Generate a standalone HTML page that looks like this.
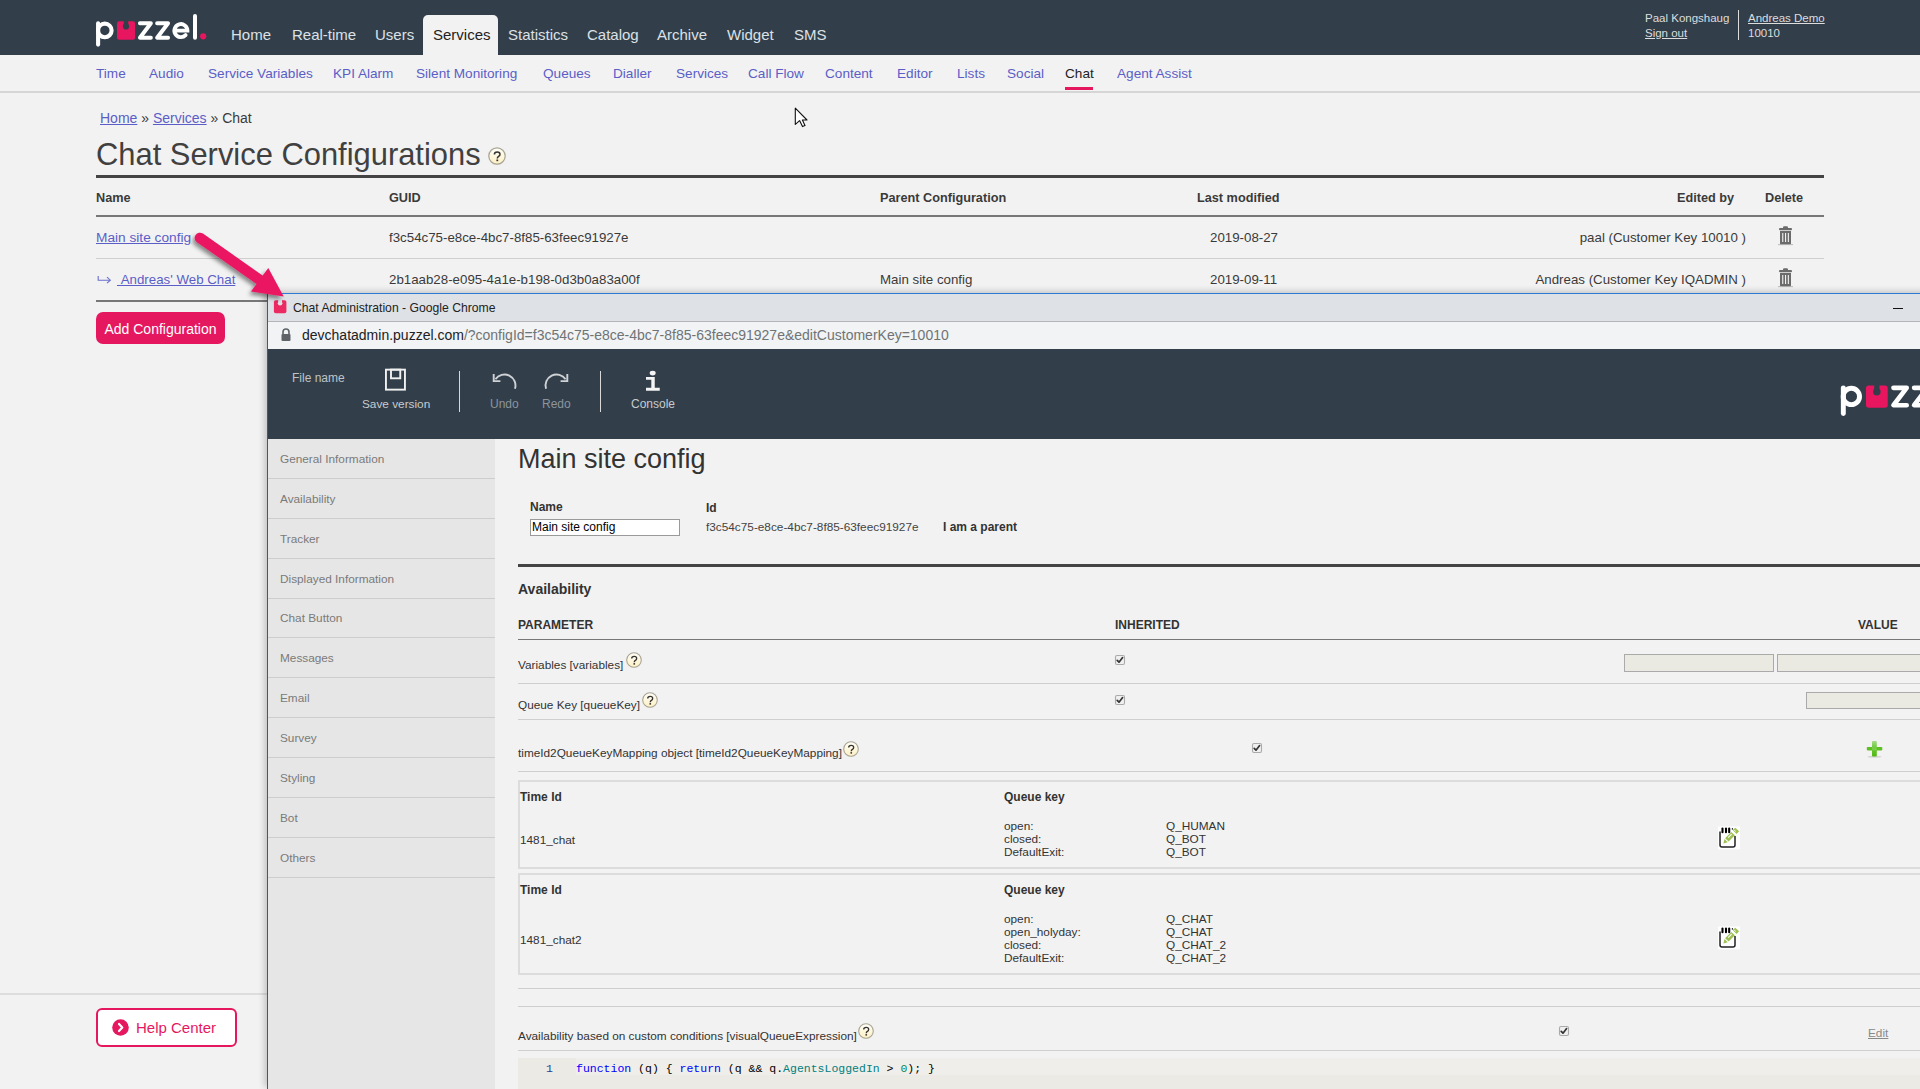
<!DOCTYPE html>
<html><head><meta charset="utf-8">
<style>
*{margin:0;padding:0;box-sizing:border-box}
html,body{width:1920px;height:1089px;overflow:hidden;background:#f2f2f2;font-family:"Liberation Sans",sans-serif}
.abs{position:absolute;white-space:nowrap}
#hdr{position:absolute;left:0;top:0;width:1920px;height:55px;background:#323f4b}
.nav{position:absolute;top:26px;font-size:15px;color:#dde1e5;line-height:18px}
#svtab{position:absolute;left:423px;top:15px;width:75px;height:40px;background:#f2f2f2;border-radius:5px 5px 0 0}
#subnav{position:absolute;left:0;top:55px;width:1920px;height:38px;background:#f2f2f2;border-bottom:2px solid #d6d6d6}
.sn{position:absolute;top:65px;font-size:13.6px;color:#5b5ec7;line-height:18px}
.lnk{color:#5b5ec7;text-decoration:underline}
.t14{font-size:13.3px;color:#3a3a3a;line-height:18px}
.th{font-size:12.7px;color:#3a3a3a;font-weight:bold;line-height:18px}
.hl{position:absolute;height:1px;background:#cfcfcf}
.help{position:absolute;width:18px;height:18px;border-radius:50%;border:1.5px solid #a8a596;background:linear-gradient(#fffef8,#fdf1c4);box-shadow:0 1px 1.5px rgba(0,0,0,.2);font:bold 12px/15px "Liberation Sans",sans-serif;color:#333;text-align:center}
/* window */
#win{position:absolute;left:267px;top:293px;width:1700px;height:796px;background:#f2f2f2;border-left:1px solid #555;box-shadow:-3px -2px 6px rgba(0,0,0,.18)}
#wtitle{position:absolute;left:0;top:0;width:100%;height:29px;background:#dee1e6;border-top:1px solid #2b7ad6;border-bottom:1px solid #b3b5b8}
#waddr{position:absolute;left:0;top:29px;width:100%;height:27px;background:#f1f3f4}
#adm{position:absolute;left:0;top:56px;width:100%;height:90px;background:#323f4b}
#side{position:absolute;left:0;top:146px;width:227px;height:650px;background:#e6e6e6}
.si{position:absolute;left:0;width:227px;height:40px;border-bottom:1px solid #cdcdcd;font-size:11.8px;color:#7a7a7a;padding-left:12px;line-height:40px}
.a12{font-size:11.8px;color:#333;line-height:14px}
.a12b{font-size:12px;color:#333;font-weight:bold;line-height:14px}
.cb{position:absolute;width:10px;height:10px;border:1px solid #aaa;border-radius:2px;background:#eee}

.s16{width:16px;height:16px;font-size:10.5px;line-height:14px;border-width:1.3px}
.edit{position:absolute;width:20px;height:22px}
</style></head><body>
<div id="hdr"></div>
<svg width="0" height="0" style="position:absolute"><defs><symbol id="hlp" viewBox="0 0 18 18"><defs><linearGradient id="hg" x1="0" y1="0" x2="0" y2="1"><stop offset="0" stop-color="#fffefa"/><stop offset="1" stop-color="#fdf0c2"/></linearGradient></defs><circle cx="9" cy="9.3" r="8.6" fill="#000" opacity=".08"/><circle cx="9" cy="9" r="8.2" fill="url(#hg)" stroke="#a9a594" stroke-width="1.2"/><path d="M6.4 7.4Q6.4 4.9 9.2 4.9Q12 4.9 12 7.2Q12 8.6 10.6 9.4Q9.3 10.2 9.3 11.6" fill="none" stroke="#333" stroke-width="1.5"/><rect x="8.4" y="12.5" width="1.8" height="1.7" fill="#333"/></symbol><symbol id="puz" viewBox="0 0 120 40">
<path d="M6.1 13.2V34.6" stroke="#fff" stroke-width="4.1" stroke-linecap="round" fill="none"/>
<circle cx="12.8" cy="20.4" r="6.8" stroke="#fff" stroke-width="4.1" fill="none"/>
<rect x="25" y="11.2" width="18.1" height="18.5" rx="2.2" fill="#e8155f"/>
<circle cx="34" cy="16.4" r="3.1" fill="#323f4b"/><rect x="31.8" y="10" width="4.4" height="6.5" fill="#323f4b"/>
<path d="M47.9 13.2H58.9L47.9 27.7H58.9" stroke="#fff" stroke-width="3.9" stroke-linecap="round" stroke-linejoin="round" fill="none"/>
<path d="M65.1 13.2H76.1L65.1 27.7H76.1" stroke="#fff" stroke-width="3.9" stroke-linecap="round" stroke-linejoin="round" fill="none"/>
<path d="M82.6 20.6H95.4A6.5 6.5 0 1 0 93.6 25.1" stroke="#fff" stroke-width="3.9" stroke-linecap="round" fill="none"/>
<path d="M103 6.1V27.7" stroke="#fff" stroke-width="4" stroke-linecap="round" fill="none"/>
<circle cx="111.2" cy="26.3" r="3.1" fill="#e8155f"/>
</symbol></defs></svg>
<div id="svtab"></div>
<!-- logo -->
<svg class="abs" style="left:92px;top:10px" width="120" height="40" viewBox="0 0 120 40"><use href="#puz"/></svg>
<div class="nav" style="left:231px">Home</div>
<div class="nav" style="left:292px">Real-time</div>
<div class="nav" style="left:375px">Users</div>
<div class="nav" style="left:433px;color:#222">Services</div>
<div class="nav" style="left:508px">Statistics</div>
<div class="nav" style="left:587px">Catalog</div>
<div class="nav" style="left:657px">Archive</div>
<div class="nav" style="left:727px">Widget</div>
<div class="nav" style="left:794px">SMS</div>

<div class="abs" style="left:1645px;top:11px;font-size:11.5px;color:#ddd;line-height:15px">Paal Kongshaug<br><span style="text-decoration:underline">Sign out</span></div>
<div class="abs" style="left:1738px;top:10px;width:1px;height:30px;background:#ddd"></div>
<div class="abs" style="left:1748px;top:11px;font-size:11.5px;color:#ddd;line-height:15px"><span style="text-decoration:underline">Andreas Demo</span><br>10010</div>

<div id="subnav"></div>
<div class="sn" style="left:96px">Time</div>
<div class="sn" style="left:149px">Audio</div>
<div class="sn" style="left:208px">Service Variables</div>
<div class="sn" style="left:333px">KPI Alarm</div>
<div class="sn" style="left:416px">Silent Monitoring</div>
<div class="sn" style="left:543px">Queues</div>
<div class="sn" style="left:613px">Dialler</div>
<div class="sn" style="left:676px">Services</div>
<div class="sn" style="left:748px">Call Flow</div>
<div class="sn" style="left:825px">Content</div>
<div class="sn" style="left:897px">Editor</div>
<div class="sn" style="left:957px">Lists</div>
<div class="sn" style="left:1007px">Social</div>
<div class="sn" style="left:1065px;color:#222">Chat</div>
<div class="abs" style="left:1065px;top:87px;width:28px;height:3px;background:#e5175f"></div>
<div class="sn" style="left:1117px">Agent Assist</div>

<!-- breadcrumb -->
<div class="abs t14" style="left:100px;top:109px;font-size:14px"><span class="lnk">Home</span> » <span class="lnk">Services</span> » Chat</div>
<div class="abs" style="left:96px;top:138px;font-size:30.9px;color:#404040;line-height:34px">Chat Service Configurations</div>
<svg class="abs" style="left:488px;top:147px" width="18" height="18" viewBox="0 0 18 18"><use href="#hlp"/></svg>
<div class="abs" style="left:96px;top:175px;width:1728px;height:3px;background:#444"></div>
<div class="abs th" style="left:96px;top:189px">Name</div>
<div class="abs th" style="left:389px;top:189px">GUID</div>
<div class="abs th" style="left:880px;top:189px">Parent Configuration</div>
<div class="abs th" style="left:1197px;top:189px">Last modified</div>
<div class="abs th" style="left:1677px;top:189px">Edited by</div>
<div class="abs th" style="left:1765px;top:189px">Delete</div>
<div class="abs" style="left:96px;top:215px;width:1728px;height:2px;background:#777"></div>
<div class="abs t14" style="left:96px;top:229px;font-size:13.7px"><span class="lnk">Main site config</span></div>
<div class="abs t14" style="left:389px;top:229px">f3c54c75-e8ce-4bc7-8f85-63feec91927e</div>
<div class="abs t14" style="left:1210px;top:229px">2019-08-27</div>
<div class="abs t14" style="right:174px;top:229px">paal (Customer Key 10010 )</div>
<div class="hl" style="left:96px;top:258px;width:1728px"></div>
<svg class="abs" style="left:97px;top:275px" width="15" height="10" viewBox="0 0 15 10"><path d="M1.2 1V5.2H13" fill="none" stroke="#6a6fd0" stroke-width="1.1"/><path d="M10 2.2L13.3 5.2L10 8.2" fill="none" stroke="#6a6fd0" stroke-width="1.1"/></svg>
<div class="abs t14" style="left:117px;top:271px"><span class="lnk">&nbsp;Andreas' Web Chat</span></div>
<div class="abs t14" style="left:389px;top:271px">2b1aab28-e095-4a1e-b198-0d3b0a83a00f</div>
<div class="abs t14" style="left:880px;top:271px">Main site config</div>
<div class="abs t14" style="left:1210px;top:271px">2019-09-11</div>
<div class="abs t14" style="right:174px;top:271px">Andreas (Customer Key IQADMIN )</div>
<div class="abs" style="left:96px;top:300px;width:1728px;height:2px;background:#777"></div>

<div class="abs" style="left:96px;top:312px;width:129px;height:32px;background:#e5175f;border-radius:7px;color:#fff;font-size:14px;line-height:35px;text-align:center">Add Configuration</div>

<div class="abs" style="left:0;top:993px;width:268px;height:2px;background:#ddd"></div>
<div class="abs" style="left:96px;top:1008px;width:141px;height:39px;border:2px solid #e5175f;border-radius:6px;background:#fff;color:#e5175f;font-size:15px;line-height:36px;padding-left:38px">Help Center</div>


<!-- chrome window -->
<div id="win">
  <div id="wtitle"></div>
  <div id="waddr"></div>
  <div id="adm"></div>
  <div id="side"></div>
</div>

<!-- title bar content -->
<svg class="abs" style="left:273px;top:300px" width="14" height="14" viewBox="0 0 14 14"><rect x="0.9" y="0.3" width="12.5" height="13" rx="1.8" fill="#ec2a62"/><circle cx="7.1" cy="3.3" r="2.3" fill="#dee1e6"/><rect x="5.2" y="-1" width="3.8" height="4.3" fill="#dee1e6"/></svg>
<div class="abs" style="left:293px;top:301px;font-size:12.2px;color:#222;line-height:15px">Chat Administration - Google Chrome</div>
<div class="abs" style="left:1893px;top:308px;width:10px;height:1px;background:#111"></div>
<!-- address -->
<svg class="abs" style="left:281px;top:328px" width="10" height="13" viewBox="0 0 10 13"><path d="M2 6V4a3 3 0 0 1 6 0v2" fill="none" stroke="#5f6368" stroke-width="1.6"/><rect x="0.5" y="6" width="9" height="7" rx="1" fill="#5f6368"/></svg>
<div class="abs" style="left:302px;top:327px;font-size:14px;color:#202124;line-height:17px">devchatadmin.puzzel.com<span style="color:#6f7376">/?configId=f3c54c75-e8ce-4bc7-8f85-63feec91927e&amp;editCustomerKey=10010</span></div>
<!-- admin toolbar -->
<div class="abs" style="left:292px;top:371px;font-size:12px;color:#bfc3c7;line-height:14px">File name</div>
<svg class="abs" style="left:384px;top:368px" width="23" height="24" viewBox="0 0 23 24"><rect x="1.95" y="1.65" width="19" height="20" fill="none" stroke="#f0f0f0" stroke-width="1.9"/><rect x="7" y="1.65" width="9.25" height="8.65" fill="none" stroke="#f0f0f0" stroke-width="1.9"/></svg>
<div class="abs" style="left:362px;top:397px;font-size:11.8px;color:#c8cbce;line-height:14px">Save version</div>
<div class="abs" style="left:459px;top:371px;width:1px;height:41px;background:#d8d8d8"></div>
<svg class="abs" style="left:491px;top:371px" width="27" height="20" viewBox="0 0 27 20"><path d="M4.4 8.25A11 11 0 0 1 23.96 17.8" fill="none" stroke="#cfd2d5" stroke-width="1.9"/><path d="M2.7 3V10.1H9.4" fill="none" stroke="#cfd2d5" stroke-width="1.9"/></svg>
<div class="abs" style="left:490px;top:397px;font-size:12px;color:#8d949b;line-height:14px">Undo</div>
<svg class="abs" style="left:543px;top:371px" width="27" height="20" viewBox="0 0 27 20"><g transform="translate(27,0) scale(-1,1)"><path d="M4.4 8.25A11 11 0 0 1 23.96 17.8" fill="none" stroke="#cfd2d5" stroke-width="1.9"/><path d="M2.7 3V10.1H9.4" fill="none" stroke="#cfd2d5" stroke-width="1.9"/></g></svg>
<div class="abs" style="left:542px;top:397px;font-size:12px;color:#8d949b;line-height:14px">Redo</div>
<div class="abs" style="left:600px;top:371px;width:1px;height:41px;background:#d8d8d8"></div>
<svg class="abs" style="left:644px;top:369px" width="18" height="24" viewBox="0 0 18 24"><ellipse cx="8.7" cy="4.1" rx="3" ry="2.4" fill="#f4f4f4"/><path d="M2 8H10.75V18.8H15.75V21.75H2V18.8H7.3V10.8H2Z" fill="#f4f4f4"/></svg>
<div class="abs" style="left:631px;top:397px;font-size:12px;color:#c8cbce;line-height:14px">Console</div>
<!-- logo right -->
<svg class="abs" style="left:1836px;top:372px" width="144" height="48" viewBox="0 0 120 40"><use href="#puz"/></svg>
<div class="si" style="left:268px;top:439px">General Information</div>
<div class="si" style="left:268px;top:479px">Availability</div>
<div class="si" style="left:268px;top:519px">Tracker</div>
<div class="si" style="left:268px;top:559px">Displayed Information</div>
<div class="si" style="left:268px;top:599px;height:39px;line-height:39px">Chat Button</div>
<div class="si" style="left:268px;top:638px">Messages</div>
<div class="si" style="left:268px;top:678px">Email</div>
<div class="si" style="left:268px;top:718px">Survey</div>
<div class="si" style="left:268px;top:758px">Styling</div>
<div class="si" style="left:268px;top:798px">Bot</div>
<div class="si" style="left:268px;top:838px">Others</div>

<!-- content -->
<div class="abs" style="left:518px;top:444px;font-size:27px;color:#333;line-height:31px">Main site config</div>
<div class="abs a12b" style="left:530px;top:500px">Name</div>
<div class="abs" style="left:530px;top:519px;width:150px;height:17px;border:1px solid #9a9a9a;background:#fff;font-size:12px;color:#000;line-height:15px;padding-left:1px">Main site config</div>
<div class="abs a12b" style="left:706px;top:501px">Id</div>
<div class="abs a12" style="left:706px;top:520px;color:#444">f3c54c75-e8ce-4bc7-8f85-63feec91927e</div>
<div class="abs a12b" style="left:943px;top:520px">I am a parent</div>
<div class="abs" style="left:518px;top:564px;width:1402px;height:3px;background:#444"></div>
<div class="abs" style="left:518px;top:581px;font-size:14px;font-weight:bold;color:#333;line-height:16px">Availability</div>
<div class="abs a12b" style="left:518px;top:618px">PARAMETER</div>
<div class="abs a12b" style="left:1115px;top:618px">INHERITED</div>
<div class="abs a12b" style="left:1858px;top:618px">VALUE</div>
<div class="abs" style="left:518px;top:639px;width:1402px;height:1px;background:#777"></div>

<div class="abs a12" style="left:518px;top:658px">Variables [variables]</div>
<svg class="abs" style="left:626px;top:652px" width="16" height="16" viewBox="0 0 18 18"><use href="#hlp"/></svg>
<svg class="abs" style="left:1114px;top:654px" width="12" height="12" viewBox="0 0 12 12"><rect x="1.5" y="1.5" width="9" height="9" rx="1.5" fill="#f0f0f0" stroke="#aaa" stroke-width="1.1"/><path d="M3.2 6.3L5 8.2L8.6 3.6" fill="none" stroke="#333" stroke-width="1.7" stroke-linecap="round" stroke-linejoin="round"/></svg>
<div class="abs" style="left:1624px;top:654px;width:150px;height:18px;border:1px solid #aaa;background:#eae9e2"></div>
<div class="abs" style="left:1777px;top:654px;width:150px;height:18px;border:1px solid #aaa;background:#eae9e2"></div>
<div class="hl" style="left:518px;top:683px;width:1402px"></div>

<div class="abs a12" style="left:518px;top:698px">Queue Key [queueKey]</div>
<svg class="abs" style="left:642px;top:692px" width="16" height="16" viewBox="0 0 18 18"><use href="#hlp"/></svg>
<svg class="abs" style="left:1114px;top:694px" width="12" height="12" viewBox="0 0 12 12"><rect x="1.5" y="1.5" width="9" height="9" rx="1.5" fill="#f0f0f0" stroke="#aaa" stroke-width="1.1"/><path d="M3.2 6.3L5 8.2L8.6 3.6" fill="none" stroke="#333" stroke-width="1.7" stroke-linecap="round" stroke-linejoin="round"/></svg>
<div class="abs" style="left:1806px;top:692px;width:150px;height:17px;border:1px solid #aaa;background:#eae9e2"></div>
<div class="hl" style="left:518px;top:719px;width:1402px"></div>

<div class="abs a12" style="left:518px;top:746px">timeId2QueueKeyMapping object [timeId2QueueKeyMapping]</div>
<svg class="abs" style="left:843px;top:741px" width="16" height="16" viewBox="0 0 18 18"><use href="#hlp"/></svg>
<svg class="abs" style="left:1251px;top:742px" width="12" height="12" viewBox="0 0 12 12"><rect x="1.5" y="1.5" width="9" height="9" rx="1.5" fill="#f0f0f0" stroke="#aaa" stroke-width="1.1"/><path d="M3.2 6.3L5 8.2L8.6 3.6" fill="none" stroke="#333" stroke-width="1.7" stroke-linecap="round" stroke-linejoin="round"/></svg>
<svg class="abs" style="left:1865px;top:740px" width="20" height="20" viewBox="0 0 20 20"><defs><linearGradient id="pg" x1="0" y1="0" x2="0" y2="1"><stop offset="0" stop-color="#a3dc86"/><stop offset=".45" stop-color="#6cc63a"/><stop offset="1" stop-color="#4fb80e"/></linearGradient></defs><ellipse cx="9.5" cy="16.8" rx="7" ry="1" fill="#000" opacity=".12"/><rect x="7" y="1" width="4.8" height="15.6" rx="1" fill="url(#pg)"/><rect x="1.8" y="6.9" width="15.5" height="3.5" rx="0.8" fill="#5cc021"/><rect x="7" y="6.9" width="4.8" height="3.5" fill="#79cc4a"/></svg>
<div class="hl" style="left:518px;top:771px;width:1402px"></div>

<div class="abs" style="left:518px;top:780px;width:1410px;height:89px;border:2px solid #dcdcdc"></div>
<div class="abs a12b" style="left:520px;top:790px">Time Id</div>
<div class="abs a12b" style="left:1004px;top:790px">Queue key</div>
<div class="abs a12" style="left:520px;top:833px">1481_chat</div>
<div class="abs a12" style="left:1004px;top:820px;line-height:13px">open:<br>closed:<br>DefaultExit:</div>
<div class="abs a12" style="left:1166px;top:820px;line-height:13px">Q_HUMAN<br>Q_BOT<br>Q_BOT</div>
<div class="edit" style="left:1718px;top:826px"><svg width="24" height="24" viewBox="0 0 24 24"><rect x="0" y="0.5" width="22" height="22.8" fill="#fff"/><path d="M2 5.5V19.1Q2 21.1 4 21.1H15Q17 21.1 17 19.1V10" fill="none" stroke="#222" stroke-width="1.5"/><g stroke="#000" stroke-width="2.1" stroke-linecap="round"><path d="M4.5 2.6V6.3"/><path d="M8 2.6V6.3"/><path d="M11.2 2.6V6.3"/></g><path d="M14.4 2V3.8" stroke="#333" stroke-width="1.1"/><path d="M13.3 5.9L16.9 9.2L10.6 15.6L7.1 12.2Z" fill="#9dc153"/><path d="M6.5 13L9.7 16.2L5.4 17.6Z" fill="#9dc153"/><path d="M14.7 4.1L17.3 1.7L21.1 5.3L18.5 8.1Z" fill="#9dc153"/><path d="M10.2 11.6L13.6 8.2" stroke="#fff" stroke-width="1.1"/><path d="M16.2 4.2L17.8 5.4" stroke="#fff" stroke-width="0.9"/></svg></div>

<div class="abs" style="left:518px;top:873px;width:1410px;height:102px;border:2px solid #dcdcdc"></div>
<div class="abs a12b" style="left:520px;top:883px">Time Id</div>
<div class="abs a12b" style="left:1004px;top:883px">Queue key</div>
<div class="abs a12" style="left:520px;top:933px">1481_chat2</div>
<div class="abs a12" style="left:1004px;top:913px;line-height:13px">open:<br>open_holyday:<br>closed:<br>DefaultExit:</div>
<div class="abs a12" style="left:1166px;top:913px;line-height:13px">Q_CHAT<br>Q_CHAT<br>Q_CHAT_2<br>Q_CHAT_2</div>
<div class="edit" style="left:1718px;top:926px"><svg width="24" height="24" viewBox="0 0 24 24"><rect x="0" y="0.5" width="22" height="22.8" fill="#fff"/><path d="M2 5.5V19.1Q2 21.1 4 21.1H15Q17 21.1 17 19.1V10" fill="none" stroke="#222" stroke-width="1.5"/><g stroke="#000" stroke-width="2.1" stroke-linecap="round"><path d="M4.5 2.6V6.3"/><path d="M8 2.6V6.3"/><path d="M11.2 2.6V6.3"/></g><path d="M14.4 2V3.8" stroke="#333" stroke-width="1.1"/><path d="M13.3 5.9L16.9 9.2L10.6 15.6L7.1 12.2Z" fill="#9dc153"/><path d="M6.5 13L9.7 16.2L5.4 17.6Z" fill="#9dc153"/><path d="M14.7 4.1L17.3 1.7L21.1 5.3L18.5 8.1Z" fill="#9dc153"/><path d="M10.2 11.6L13.6 8.2" stroke="#fff" stroke-width="1.1"/><path d="M16.2 4.2L17.8 5.4" stroke="#fff" stroke-width="0.9"/></svg></div>

<div class="hl" style="left:518px;top:988px;width:1402px"></div>
<div class="hl" style="left:518px;top:1006px;width:1402px"></div>
<div class="abs a12" style="left:518px;top:1029px">Availability based on custom conditions [visualQueueExpression]</div>
<svg class="abs" style="left:858px;top:1023px" width="16" height="16" viewBox="0 0 18 18"><use href="#hlp"/></svg>
<svg class="abs" style="left:1558px;top:1025px" width="12" height="12" viewBox="0 0 12 12"><rect x="1.5" y="1.5" width="9" height="9" rx="1.5" fill="#f0f0f0" stroke="#aaa" stroke-width="1.1"/><path d="M3.2 6.3L5 8.2L8.6 3.6" fill="none" stroke="#333" stroke-width="1.7" stroke-linecap="round" stroke-linejoin="round"/></svg>
<div class="abs a12" style="left:1868px;top:1026px;color:#888;text-decoration:underline">Edit</div>
<div class="hl" style="left:518px;top:1050px;width:1402px"></div>
<div class="abs" style="left:518px;top:1058px;width:1402px;height:31px;background:#ebeae4"></div>
<div class="abs" style="left:576px;top:1058px;width:1344px;height:17px;background:#efeeea"></div>
<div class="abs" style="left:546px;top:1061px;font:11.5px/15px 'Liberation Mono',monospace;color:#27409a">1</div>
<div class="abs" style="left:576px;top:1061px;font:11.5px/15px 'Liberation Mono',monospace;color:#000"><span style="color:#0000ff">function</span> (q) { <span style="color:#0000ff">return</span> (q &amp;&amp; q.<span style="color:#008080">AgentsLoggedIn</span> &gt; <span style="color:#098658">0</span>); }</div>

<!-- trash -->
<svg class="abs" style="left:1776px;top:224px" width="20" height="24" viewBox="0 0 20 24"><g fill="#6b6b6b"><rect x="7" y="2.2" width="5" height="3" rx="1.2"/><rect x="3" y="4" width="13" height="2.2" rx="1"/><path d="M4 7H15V19.5Q15 20.5 14 20.5H5Q4 20.5 4 19.5Z"/></g><g fill="#f2f2f2"><rect x="6.2" y="9" width="1.1" height="9"/><rect x="9" y="9" width="1.1" height="9"/><rect x="11.8" y="9" width="1.1" height="9"/></g><rect x="2" y="20.3" width="15" height="0.8" fill="#aaa"/></svg>
<svg class="abs" style="left:1776px;top:266px" width="20" height="24" viewBox="0 0 20 24"><g fill="#6b6b6b"><rect x="7" y="2.2" width="5" height="3" rx="1.2"/><rect x="3" y="4" width="13" height="2.2" rx="1"/><path d="M4 7H15V19.5Q15 20.5 14 20.5H5Q4 20.5 4 19.5Z"/></g><g fill="#f2f2f2"><rect x="6.2" y="9" width="1.1" height="9"/><rect x="9" y="9" width="1.1" height="9"/><rect x="11.8" y="9" width="1.1" height="9"/></g><rect x="2" y="20.3" width="15" height="0.8" fill="#aaa"/></svg>
<!-- cursor -->
<svg class="abs" style="left:790px;top:103px" width="24" height="28" viewBox="790 103 24 28"><path d="M795.3 108.2V124.4L799.6 120.6L802.5 126.6L805 125.6L802.4 120H807Z" fill="#fff" stroke="#111" stroke-width="1.1" stroke-linejoin="round"/></svg>
<!-- arrow -->
<svg class="abs" style="left:180px;top:220px;overflow:visible" width="120" height="90" viewBox="180 220 120 90"><defs><filter id="sh" x="-30%" y="-30%" width="160%" height="160%"><feDropShadow dx="-2" dy="3" stdDeviation="2.2" flood-color="#000" flood-opacity="0.45"/></filter></defs><g filter="url(#sh)"><path d="M199.9 237.9L261 280.7" stroke="#ea1662" stroke-width="10.5" stroke-linecap="round"/><path d="M268.3 268L283.7 296.6L251 291.5Z" fill="#ea1662"/></g></svg>
<!-- help center chevron -->
<svg class="abs" style="left:112px;top:1019px" width="17" height="17" viewBox="0 0 17 17"><circle cx="8.5" cy="8.5" r="8.3" fill="#e5175f"/><path d="M7 5L10.3 8.5L7 12" stroke="#fff" stroke-width="2.2" fill="none" stroke-linecap="round" stroke-linejoin="round"/></svg>
</body></html>
